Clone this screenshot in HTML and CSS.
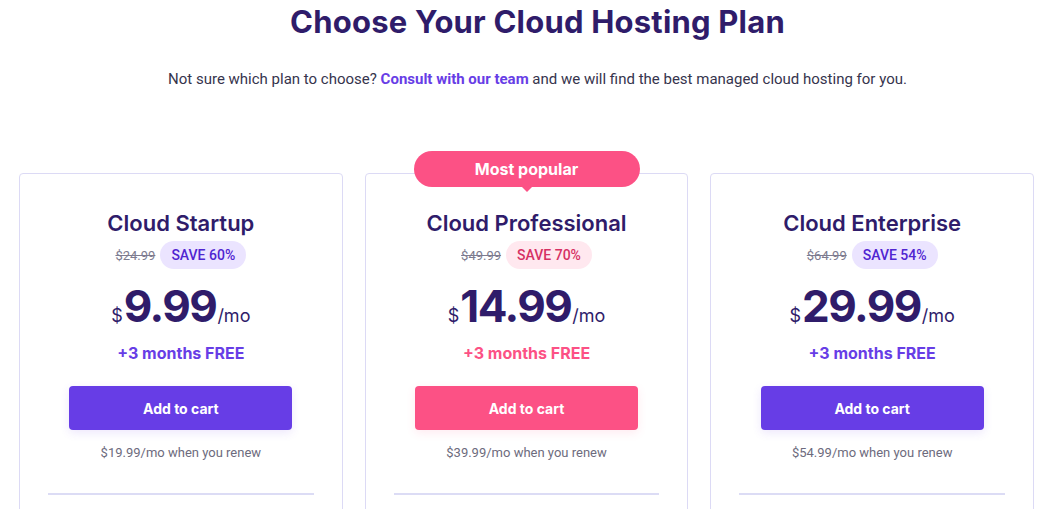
FILE: index.html
```html
<!DOCTYPE html>
<html lang="en">
<head>
<meta charset="utf-8">
<title>Choose Your Cloud Hosting Plan</title>
<link rel="stylesheet" href="styles.css">
</head>
<body>
<main class="page">
  <header class="intro">
    <h1 class="heading">Choose Your Cloud Hosting Plan</h1>
    <p class="lead">Not sure which plan to choose? <a class="lead-link" href="#">Consult with our team</a> and we will find the best managed cloud hosting for you.</p>
  </header>

  <section class="plans">
    <article class="plan">
      <h2 class="plan-name">Cloud Startup</h2>
      <div class="save-row">
        <span class="old-price">$24.99</span>
        <span class="save">SAVE 60%</span>
      </div>
      <div class="price"><span class="cur">$</span><span class="amount">9.99</span><span class="per">/mo</span></div>
      <div class="free">+3 months FREE</div>
      <button class="cart">Add to cart</button>
      <div class="renew">$19.99/mo when you renew</div>
      <hr class="divider">
    </article>

    <article class="plan plan-popular">
      <div class="badge">Most popular</div>
      <h2 class="plan-name">Cloud Professional</h2>
      <div class="save-row">
        <span class="old-price">$49.99</span>
        <span class="save save-pink">SAVE 70%</span>
      </div>
      <div class="price"><span class="cur">$</span><span class="amount">14.99</span><span class="per">/mo</span></div>
      <div class="free free-pink">+3 months FREE</div>
      <button class="cart cart-pink">Add to cart</button>
      <div class="renew">$39.99/mo when you renew</div>
      <hr class="divider">
    </article>

    <article class="plan">
      <h2 class="plan-name">Cloud Enterprise</h2>
      <div class="save-row">
        <span class="old-price">$64.99</span>
        <span class="save">SAVE 54%</span>
      </div>
      <div class="price"><span class="cur">$</span><span class="amount">29.99</span><span class="per">/mo</span></div>
      <div class="free">+3 months FREE</div>
      <button class="cart">Add to cart</button>
      <div class="renew">$54.99/mo when you renew</div>
      <hr class="divider">
    </article>
  </section>
</main>
</body>
</html>
```

FILE: styles.css
```css
* { box-sizing: border-box; }

html, body {
  margin: 0;
  padding: 0;
  background: #ffffff;
  overflow: hidden;
}

body {
  font-family: "Inter", "Roboto", sans-serif;
  color: #2f1c6a;
}

.page {
  display: flex;
  flex-direction: column;
  padding-top: 2px;
}

.intro {
  display: flex;
  flex-direction: column;
  align-items: center;
  padding-left: 20px;
}

.heading {
  margin: 0;
  font-size: 31px;
  line-height: 40px;
  font-weight: 700;
  letter-spacing: 0.2px;
  color: #2f1c6a;
}

.lead {
  margin: 27px 0 0;
  font-family: "Roboto", sans-serif;
  font-size: 15px;
  line-height: 20px;
  color: #36344d;
}

.lead-link {
  color: #673de6;
  font-weight: 700;
  text-decoration: none;
}

.plans {
  display: flex;
  gap: 22px;
  padding: 0 21px 0 19px;
  margin-top: 84px;
}

.plan {
  position: relative;
  flex: 1;
  height: 360px;
  border: 1px solid #dcdaf5;
  border-radius: 4px;
  padding: 36px 28px 0;
  display: flex;
  flex-direction: column;
  align-items: center;
}

.badge {
  position: absolute;
  top: -23px;
  left: 50%;
  transform: translateX(-50%);
  width: 226px;
  height: 36px;
  border-radius: 18px;
  background: #fc5185;
  color: #ffffff;
  font-size: 16px;
  font-weight: 700;
  line-height: 36px;
  text-align: center;
}

.badge::after {
  content: "";
  position: absolute;
  left: 50%;
  bottom: -5px;
  margin-left: -5px;
  border-left: 5px solid transparent;
  border-right: 5px solid transparent;
  border-top: 5px solid #fc5185;
}

.plan-name {
  margin: 0;
  font-size: 22px;
  line-height: 26px;
  font-weight: 600;
  color: #2f1c6a;
}

.save-row {
  display: flex;
  align-items: center;
  gap: 5px;
  margin-top: 5px;
}

.old-price {
  font-family: "Roboto", sans-serif;
  font-size: 13px;
  color: #7d7b8f;
  text-decoration: line-through;
}

.save {
  display: inline-flex;
  align-items: center;
  height: 28px;
  padding: 0 11px;
  border-radius: 14px;
  background: #ebe4ff;
  color: #5025d1;
  font-family: "Roboto", sans-serif;
  font-size: 14px;
  font-weight: 500;
}

.save-pink {
  background: #ffe8ef;
  color: #d63163;
}

.price {
  display: flex;
  align-items: baseline;
  margin-top: 12px;
  height: 50px;
  color: #2f1c6a;
}

.cur {
  font-size: 18px;
  font-weight: 400;
  margin-right: 1px;
}

.amount {
  font-size: 44px;
  line-height: 50px;
  font-weight: 700;
  letter-spacing: -1.5px;
}

.per {
  font-size: 18px;
  font-weight: 400;
  margin-left: 1px;
}

.free {
  margin-top: 12px;
  font-size: 16px;
  line-height: 20px;
  font-weight: 700;
  color: #673de6;
}

.free-pink {
  color: #fc5185;
}

.cart {
  margin-top: 23px;
  width: 223px;
  height: 44px;
  border: none;
  border-radius: 4px;
  background: #673de6;
  color: #ffffff;
  font-family: "Inter", sans-serif;
  font-size: 14px;
  font-weight: 700;
  box-shadow: 0 3px 10px rgba(103, 61, 230, 0.12);
  cursor: pointer;
}

.cart-pink {
  background: #fc5185;
  box-shadow: 0 3px 10px rgba(252, 81, 133, 0.12);
}

.renew {
  margin-top: 14px;
  font-family: "Roboto", sans-serif;
  font-size: 13px;
  line-height: 18px;
  color: #6d6b7d;
}

.divider {
  align-self: stretch;
  margin: 31px 0 0;
  border: none;
  height: 2px;
  background: #dcdcf5;
}
```
